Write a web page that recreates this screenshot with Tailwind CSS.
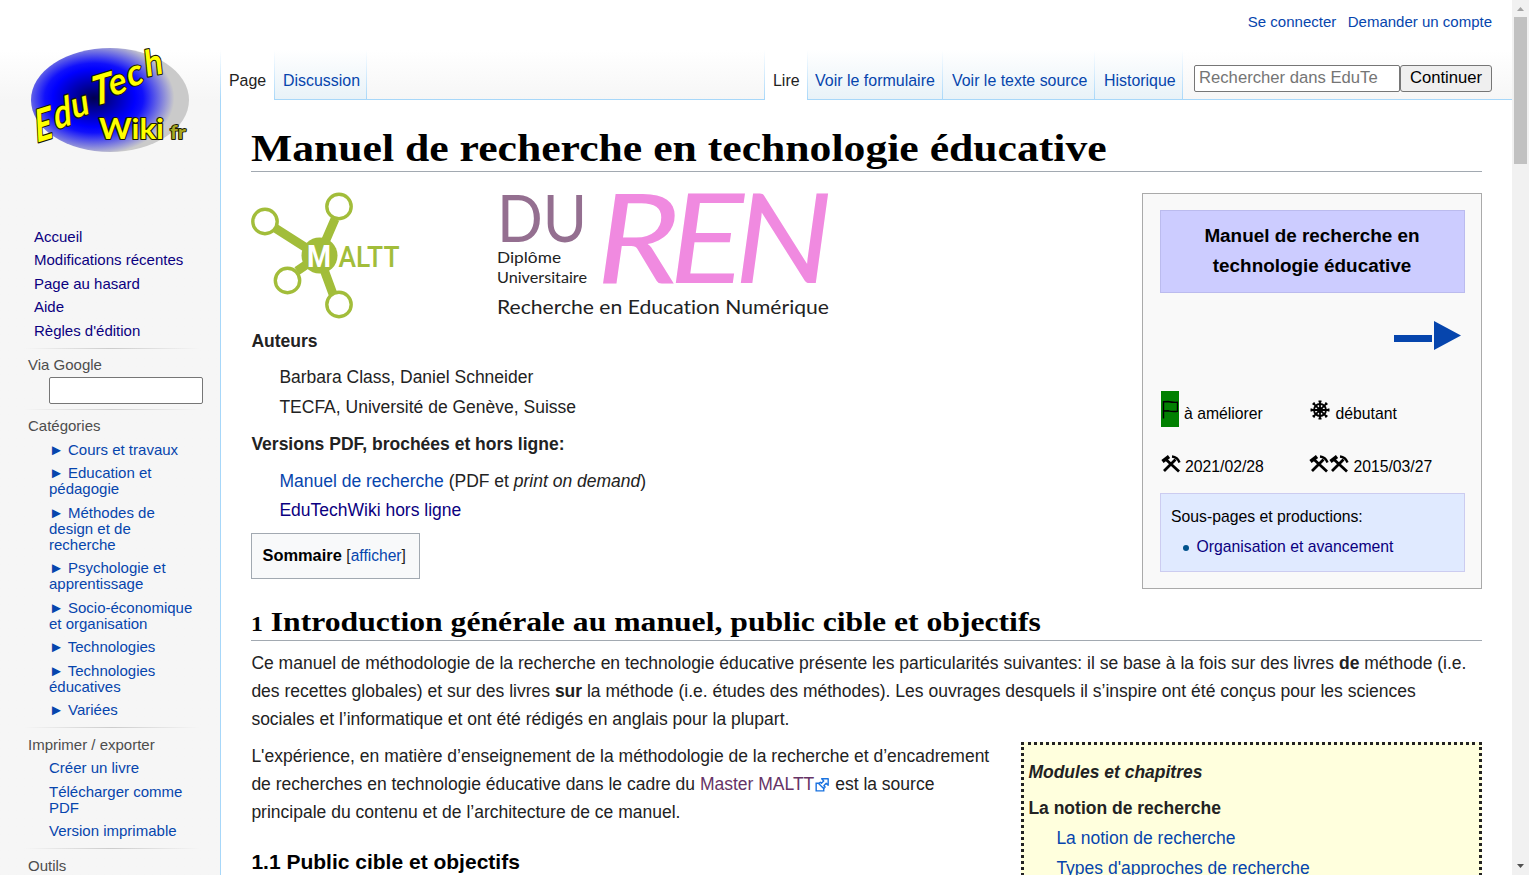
<!DOCTYPE html>
<html lang="fr">
<head>
<meta charset="utf-8">
<title>Manuel de recherche en technologie éducative — EduTech Wiki</title>
<script src="https://cdn.jsdelivr.net/npm/@tailwindcss/browser@4"></script>
</head>
<body class="h-[875px] w-[1529px] overflow-hidden bg-[#f6f6f6] font-['Liberation_Sans',Arial,sans-serif] text-[#222]">
<div class="flex h-[875px]">

  <!-- Sidebar -->
  <aside class="h-full w-[220px] shrink-0 bg-linear-to-b from-white from-[50px] to-[#f6f6f6] to-[100px] text-[15px] leading-4 text-[#0645ad]">
    <svg class="block h-[228.9px] w-[220px]" viewBox="0 0 220 228.900">
      <defs>
        <radialGradient id="orb" gradientUnits="userSpaceOnUse" cx="0" cy="0" r="1" gradientTransform="translate(94 98) scale(82 58)">
          <stop offset="0" stop-color="#000050"/>
          <stop offset=".22" stop-color="#0000a0"/>
          <stop offset=".5" stop-color="#0000ff"/>
          <stop offset=".6" stop-color="#1010fc"/>
          <stop offset=".98" stop-color="#cacaca"/>
        </radialGradient>
      </defs>
      <ellipse cx="110" cy="100" rx="79" ry="52" fill="url(#orb)"/>
      <g font-family="Lato, sans-serif" font-weight="700" fill="#ffff00" stroke="#1a1a00" stroke-width="2.200" paint-order="stroke" stroke-linejoin="round">
        <text transform="translate(36 143) rotate(-17) skewX(-14)" font-size="44" textLength="18" lengthAdjust="spacingAndGlyphs">E</text>
        <text transform="translate(55 130) rotate(-18) skewX(-14)" font-size="40" textLength="18" lengthAdjust="spacingAndGlyphs">d</text>
        <text transform="translate(73 119) rotate(-18) skewX(-10)" font-size="36" textLength="18" lengthAdjust="spacingAndGlyphs">u</text>
        <text transform="translate(92 107) rotate(-17) skewX(-17)" font-size="40" textLength="21" lengthAdjust="spacingAndGlyphs">T</text>
        <text transform="translate(111 97) rotate(-20) skewX(-10)" font-size="36" textLength="18" lengthAdjust="spacingAndGlyphs">e</text>
        <text transform="translate(129 88) rotate(-20) skewX(-10)" font-size="36" textLength="16" lengthAdjust="spacingAndGlyphs">c</text>
        <text transform="translate(146 77) rotate(-12) skewX(-6)" font-size="36" textLength="18" lengthAdjust="spacingAndGlyphs">h</text>
        <text x="99" y="139" font-size="29" textLength="65" lengthAdjust="spacingAndGlyphs">Wiki</text>
        <text x="170" y="139" font-size="19" fill="#a8a820" stroke-width="1.800" textLength="16" lengthAdjust="spacingAndGlyphs">fr</text>
      </g>
    </svg>
    <nav class="flex flex-col gap-[7.5px] pl-[34px] text-[#0b0080]">
      <a>Accueil</a><a>Modifications récentes</a><a>Page au hasard</a><a>Aide</a><a>Règles d'édition</a>
    </nav>
    <div class="mt-[9px] ml-6 h-px w-44 bg-linear-to-r from-transparent via-[#ccc] to-transparent"></div>
    <h3 class="mt-2 pl-7 text-[#4d4d4d]">Via Google</h3>
    <div class="mt-1 ml-[49px] h-[27px] w-[154px] rounded-[2px] border border-[#767676] bg-white"></div>
    <div class="mt-[5px] ml-6 h-px w-44 bg-linear-to-r from-transparent via-[#ccc] to-transparent"></div>
    <h3 class="mt-2 pl-7 text-[#4d4d4d]">Catégories</h3>
    <ul class="mt-2 flex flex-col gap-[7.5px] pl-[49px]">
      <li>► Cours et travaux</li>
      <li>► Education et<br>pédagogie</li>
      <li>► Méthodes de<br>design et de<br>recherche</li>
      <li>► Psychologie et<br>apprentissage</li>
      <li>► Socio-économique<br>et organisation</li>
      <li>► Technologies</li>
      <li>► Technologies<br>éducatives</li>
      <li>► Variées</li>
    </ul>
    <div class="mt-[9px] ml-6 h-px w-44 bg-linear-to-r from-transparent via-[#ccc] to-transparent"></div>
    <h3 class="mt-[9px] pl-7 text-[#4d4d4d]">Imprimer / exporter</h3>
    <ul class="mt-[7px] flex flex-col gap-[7.5px] pl-[49px]">
      <li>Créer un livre</li>
      <li>Télécharger comme<br>PDF</li>
      <li>Version imprimable</li>
    </ul>
    <div class="mt-[9px] ml-6 h-px w-44 bg-linear-to-r from-transparent via-[#ccc] to-transparent"></div>
    <h3 class="mt-[9px] pl-7 text-[#4d4d4d]">Outils</h3>
  </aside>

  <div class="flex h-full w-[1292px] shrink-0 flex-col">
    <!-- Header -->
    <header class="flex h-[100px] flex-col bg-linear-to-b from-white from-50% to-[#f6f6f6]">
      <div class="flex h-[50px] justify-end gap-[11.5px] pt-[14px] pr-5 text-[15px] leading-4 text-[#0645ad]">
        <a>Se connecter</a><a>Demander un compte</a>
      </div>
      <div class="flex h-[50px] text-[16.25px] leading-[18px] whitespace-nowrap text-[#0645ad]">
        <div class="w-px bg-linear-to-b from-white to-[#a7d7f9]"></div>
        <div class="w-[53px] bg-white pt-[21px] pl-[8.4px] text-[#222]"><span class="inline-block origin-left scale-x-[.98]">Page</span></div>
        <div class="w-px bg-linear-to-b from-white to-[#a7d7f9]"></div>
        <div class="w-[91px] border-b border-[#a7d7f9] bg-linear-to-b from-white to-[#e8f2f8] pt-[21px] pl-2"><span class="inline-block origin-left scale-x-[.98]">Discussion</span></div>
        <div class="w-px bg-linear-to-b from-white to-[#a7d7f9]"></div>
        <div class="w-[397px] border-b border-[#a7d7f9]"></div>
        <div class="w-px bg-linear-to-b from-white to-[#a7d7f9]"></div>
        <div class="w-[42px] bg-white pt-[21px] pl-2 text-[#222]"><span class="inline-block origin-left scale-x-[.98]">Lire</span></div>
        <div class="w-px bg-linear-to-b from-white to-[#a7d7f9]"></div>
        <div class="w-[134px] border-b border-[#a7d7f9] bg-linear-to-b from-white to-[#e8f2f8] pt-[21px] pl-[7.2px]"><span class="inline-block origin-left scale-x-[.983]">Voir le formulaire</span></div>
        <div class="w-px bg-linear-to-b from-white to-[#a7d7f9]"></div>
        <div class="w-[151px] border-b border-[#a7d7f9] bg-linear-to-b from-white to-[#e8f2f8] pt-[21px] pl-[9px]"><span class="inline-block origin-left scale-x-[.98]">Voir le texte source</span></div>
        <div class="w-px bg-linear-to-b from-white to-[#a7d7f9]"></div>
        <div class="w-[87px] border-b border-[#a7d7f9] bg-linear-to-b from-white to-[#e8f2f8] pt-[21px] pl-[9px]"><span class="inline-block origin-left scale-x-[.98]">Historique</span></div>
        <div class="w-px bg-linear-to-b from-white to-[#a7d7f9]"></div>
        <div class="flex grow border-b border-[#a7d7f9] pt-[15px] pl-[11px] text-[16.67px]">
          <div class="h-[27px] w-[206px] rounded-[2px] border border-[#767676] bg-white pt-[3px] pl-1 text-[#757575]">Rechercher dans EduTe</div>
          <div class="h-[27px] w-[92px] rounded-[3px] border border-[#767676] bg-[#efefef] pt-[3px] text-center text-black">Continuer</div>
        </div>
      </div>
    </header>

    <!-- Article -->
    <main class="h-[775px] overflow-hidden border-l border-[#a7d7f9] bg-white pr-[30px] pl-[30px] text-[17.5px] leading-7">
      <h1 class="h-[72px] border-b border-[#a2a9b1] pt-[25px] font-['Liberation_Serif',Georgia,serif] text-[38px] leading-[46px] font-bold whitespace-nowrap text-black"><span class="inline-block origin-left scale-x-[1.149]">Manuel de recherche en technologie éducative</span></h1>

      <div class="mt-[21px] flex h-[396px] justify-between">
        <div>
          <div class="flex h-[125px] gap-[98px]">
            <svg class="h-[125px] w-[149px] overflow-visible" viewBox="0 0 149 125">
              <g stroke="#a2bd3a" stroke-width="9" fill="none">
                <path d="M24 35 68 63M84 26 68 63M46 78 68 63M68 63 86 112"/>
              </g>
              <circle cx="68.500" cy="62.500" r="18" fill="#a2bd3a"/>
              <g stroke="#a2bd3a" stroke-width="3.400" fill="#fff">
                <circle cx="14" cy="28.500" r="12.200"/><circle cx="88" cy="13.500" r="12.200"/><circle cx="36.500" cy="87.500" r="12.200"/><circle cx="88" cy="111.500" r="12.200"/>
              </g>
              <text x="56" y="74" font-family="Roboto, sans-serif" font-weight="700" font-size="31" fill="#fff" textLength="24" lengthAdjust="spacingAndGlyphs">M</text>
              <text x="87.500" y="74" font-family="Roboto, sans-serif" font-weight="500" font-size="29" fill="#a2bd3a" textLength="61" lengthAdjust="spacingAndGlyphs">ALTT</text>
            </svg>
            <svg class="h-[125px] w-[332px] overflow-visible" viewBox="0 0 332 125">
              <g font-family="Lato, sans-serif" style="font-variant-ligatures:none">
                <text x="-1" y="49" font-size="65" fill="#946f90" textLength="90" lengthAdjust="spacingAndGlyphs">DU</text>
                <g font-size="125" font-style="italic" fill="#f08ae0">
                  <text x="98" y="90" textLength="84" lengthAdjust="spacingAndGlyphs">R</text>
                  <text x="171" y="90" textLength="75" lengthAdjust="spacingAndGlyphs">E</text>
                  <text x="236" y="90" textLength="99" lengthAdjust="spacingAndGlyphs">N</text>
                </g>
                <g fill="#222">
                  <text x="-1" y="70" font-size="15.500" textLength="64" lengthAdjust="spacingAndGlyphs">Diplôme</text>
                  <text x="-1" y="90" font-size="15.500" textLength="90" lengthAdjust="spacingAndGlyphs">Universitaire</text>
                  <text x="-1" y="121" font-size="19" textLength="332" lengthAdjust="spacingAndGlyphs">Recherche en Education Numérique</text>
                </g>
              </g>
            </svg>
          </div>
          <div class="pl-[.4px]">
            <p class="mt-[9px] font-bold">Auteurs</p>
            <div class="mt-2 flex flex-col gap-[2px] pl-7"><p>Barbara Class, Daniel Schneider</p><p>TECFA, Université de Genève, Suisse</p></div>
            <p class="mt-[9px] font-bold">Versions PDF, brochées et hors ligne:</p>
            <div class="mt-[9px] flex flex-col gap-px pl-7">
              <p><a class="text-[#0645ad]">Manuel de recherche</a> (PDF et <i>print on demand</i>)</p>
              <p class="text-[#0b0080]">EduTechWiki hors ligne</p>
            </div>
          </div>
          <div class="mt-[9px] h-[46px] w-[169px] border border-[#a2a9b1] bg-[#f8f9fa] pt-[7px] pl-[10.5px] text-[16.4px] leading-7"><b class="text-black">Sommaire</b> <span class="text-[15.6px]">[<a class="text-[#0645ad]">afficher</a>]</span></div>
        </div>

        <!-- Infobox -->
        <aside class="flex h-[396px] w-[340px] flex-col border border-[#aaa] bg-[#f9f9f9] pt-4 pl-[17px] text-[15.75px] text-black">
          <div class="h-[83px] w-[305px] border border-[#bbe] bg-[#ccf] pt-[10px] pr-px text-center text-[18.9px] leading-[30px] font-bold">Manuel de recherche en<br>technologie éducative</div>
          <svg class="mt-7 ml-[233px] h-[30px] w-[70px]" viewBox="0 0 70 30"><path d="M1 14h38v7H1zM41 0l27 14.500-27 14.500z" fill="#0645ad"/></svg>
          <div class="mt-10 flex h-9 items-center pl-px">
            <span class="flex h-9 w-[18px] items-center justify-center bg-[green]"><svg class="h-5 w-4" viewBox="0 0 16 20" fill="none" stroke="#000" stroke-width="1.400"><path d="M1.500 2v17.500M1.500 2.700 6 2.500q4 1 9.500.800v9Q10 12.800 6.500 11.800L1.500 12"/></svg></span>
            <span class="mt-[9px] ml-[5px] w-[126px]">à améliorer</span>
            <svg class="mt-px h-5 w-5" viewBox="-10 -10 20 20" fill="none" stroke="#000" stroke-width="1.800"><circle r="6"/><circle r="2"/><path d="M0-9v18M-9 0h18M-6.400-6.400 6.400 6.400M6.400-6.400-6.400 6.400"/><path d="M-1.500-8.600h3M-1.500 8.600h3M-8.600-1.500v3M8.600-1.500v3M-7.300-5.300l2-2M5.300-7.300l2 2M7.300 5.300l-2 2M-5.300 7.300l-2-2"/></svg>
            <span class="mt-[9px] ml-[5.5px]">débutant</span>
          </div>
          <div class="mt-6 flex h-7 items-center pl-px">
            <svg class="-mt-[3px] h-5 w-5" viewBox="0 0 20 20" fill="none" stroke="#000"><path stroke-width="2.800" d="M5 5.500 18 17.500M14.500 5.500 3 17"/><path stroke-width="3.600" d="M1.500 7.500 8 2.500"/><path stroke-width="2.400" d="M11 2.500q5.500.5 7.500 6"/></svg>
            <span class="mt-[3px] ml-1 w-[124px]">2021/02/28</span>
            <svg class="-mt-[3px] h-5 w-5" viewBox="0 0 20 20" fill="none" stroke="#000"><path stroke-width="2.800" d="M5 5.500 18 17.500M14.500 5.500 3 17"/><path stroke-width="3.600" d="M1.500 7.500 8 2.500"/><path stroke-width="2.400" d="M11 2.500q5.500.5 7.500 6"/></svg>
            <svg class="-mt-[3px] h-5 w-5" viewBox="0 0 20 20" fill="none" stroke="#000"><path stroke-width="2.800" d="M5 5.500 18 17.500M14.500 5.500 3 17"/><path stroke-width="3.600" d="M1.500 7.500 8 2.500"/><path stroke-width="2.400" d="M11 2.500q5.500.5 7.500 6"/></svg>
            <span class="mt-[3px] ml-[4.4px]">2015/03/27</span>
          </div>
          <div class="mt-[14px] h-[79px] w-[305px] border border-[#ccccf0] bg-[#e0eaff] pt-[9px] pl-[10px]">
            <p>Sous-pages et productions:</p>
            <p class="mt-[2px] flex items-center pl-3 text-[#0b0080]"><span class="mt-[2px] mr-[7.5px] size-[6px] rounded-full bg-[#00528c]"></span>Organisation et avancement</p>
          </div>
        </aside>
      </div>

      <h2 class="mt-3 h-10 border-b border-[#a2a9b1] pt-1 font-['Liberation_Serif',Georgia,serif] text-[28px] leading-[34px] font-bold whitespace-nowrap text-black"><span class="inline-block origin-left scale-x-[1.131]"><span class="text-[21px]">1</span> Introduction générale au manuel, public cible et objectifs</span></h2>
      <p class="mt-2 pl-[.4px] whitespace-nowrap">Ce manuel de méthodologie de la recherche en technologie éducative présente les particularités suivantes: il se base à la fois sur des livres <b>de</b> méthode (i.e.<br>des recettes globales) et sur des livres <b>sur</b> la méthode (i.e. études des méthodes). Les ouvrages desquels il s’inspire ont été conçus pour les sciences<br>sociales et l’informatique et ont été rédigés en anglais pour la plupart.</p>
      <div class="mt-[9px] flex justify-between">
        <div class="pl-[.4px] whitespace-nowrap">
          <p>L'expérience, en matière d’enseignement de la méthodologie de la recherche et d’encadrement<br>de recherches en technologie éducative dans le cadre du <a class="text-[#663366]">Master MALTT</a><svg class="mr-px ml-px inline-block h-[14px] w-[14px] align-[-2px]" viewBox="0 0 12 12"><path fill="#fff" stroke="#1a73e0" stroke-width="1.200" d="M1 4.500h6.500V11H1z"/><path fill="#fff" stroke="#1a73e0" stroke-width="1.200" stroke-linejoin="round" d="M5.700.700h5.600v5.600L9.600 4.600 7.600 6.600 8.700 7.700 7.400 9 3.300 4.900 4.600 3.600 5.500 4.500 7.500 2.500z"/></svg> est la source<br>principale du contenu et de l’architecture de ce manuel.</p>
          <h3 class="mt-[22px] text-[21px] leading-7 font-bold text-black">1.1 Public cible et objectifs</h3>
        </div>
        <div class="h-[200px] w-[461px] border-[3px] border-dotted border-[#222] bg-[#ffffdd] pt-[13px] pl-[4.4px]">
          <p class="font-bold italic">Modules et chapitres</p>
          <p class="mt-2 font-bold">La notion de recherche</p>
          <div class="mt-[2px] flex flex-col gap-[2px] pl-7 text-[#0645ad]"><a>La notion de recherche</a><a>Types d'approches de recherche</a></div>
        </div>
      </div>
    </main>
  </div>

  <!-- Scrollbar -->
  <div class="flex h-full w-[17px] shrink-0 flex-col items-center bg-[#f1f1f1]">
    <svg class="h-[17px] w-[17px]" viewBox="0 0 17 17"><path d="M5 11h7L8.500 7z" fill="#a3a3a3"/></svg>
    <div class="h-[147px] w-[13px] bg-[#c1c1c1]"></div>
    <svg class="mt-auto h-[17px] w-[17px]" viewBox="0 0 17 17"><path d="M5 6h7l-3.500 4z" fill="#505050"/></svg>
  </div>
</div>
</body>
</html>
